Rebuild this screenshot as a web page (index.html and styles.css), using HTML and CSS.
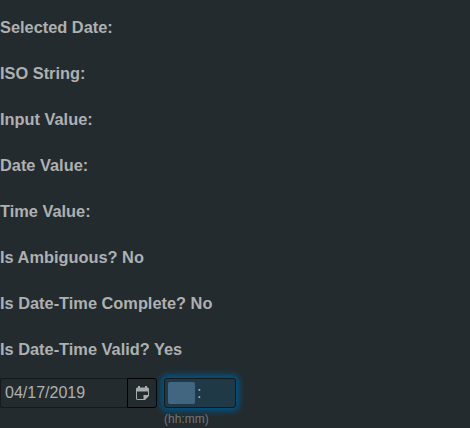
FILE: index.html
```html
<!DOCTYPE html>
<html lang="en">
<head>
<meta charset="utf-8">
<title>Date-Time Picker</title>
<link rel="stylesheet" href="styles.css">
</head>
<body>
<main class="info">
<p>Selected Date:</p>
<p>ISO String:</p>
<p>Input Value:</p>
<p>Date Value:</p>
<p>Time Value:</p>
<p>Is Ambiguous? No</p>
<p>Is Date-Time Complete? No</p>
<p>Is Date-Time Valid? Yes</p>
</main>
<div class="picker">
<div class="date"><span class="date-value">04/17/2019</span><button class="calendar" aria-label="Open calendar"><svg width="13" height="14" viewBox="0 0 13 14"><path fill="#a9acad" fill-rule="evenodd" d="M2 0h2v1.500h5V0h2v1.500h1L13 2.500V10l-4 4H1l-1-1V2.500l1-1h1zM1 5.500v7.500h6.500V9H12V5.500z"/></svg></button></div>
<div class="time-group"><div class="time"><span class="selection"></span><span class="colon">:</span></div><div class="hint">(hh:mm)</div></div>
</div>
</body>
</html>
```
FILE: styles.css
```css
*{box-sizing:border-box}
body{margin:0;height:428px;overflow:hidden;background:#232b2e;color:#aeb0b1;font-family:"Liberation Sans",Arial,sans-serif;font-size:16px}
.info{padding-top:17px}
.info p{margin:0;height:46px;line-height:20px;font-size:16.38px;font-weight:bold}
.picker{display:flex;gap:7px;margin-top:-7px}
.date{display:flex;width:157px;height:30px}
.date-value{width:127px;padding-left:4px;line-height:28px;border:1px solid #15191b;border-right:0;border-radius:3px 0 0 3px}
.calendar{display:flex;align-items:center;justify-content:center;flex:1;border:1px solid #000;border-radius:0 3px 3px 0;padding:0;background:#232b2e}
.time{display:flex;align-items:center;width:72px;height:30px;padding-left:3px;border:1px solid #14191c;border-radius:3px;background:#203947;box-shadow:0 0 6px 3px #00568a}
.selection{width:27px;height:22px;border-radius:2px;background:#426580}
.colon{margin-left:2px}
.hint{margin-top:4px;font-size:12px;line-height:14px;color:#737778}
```
